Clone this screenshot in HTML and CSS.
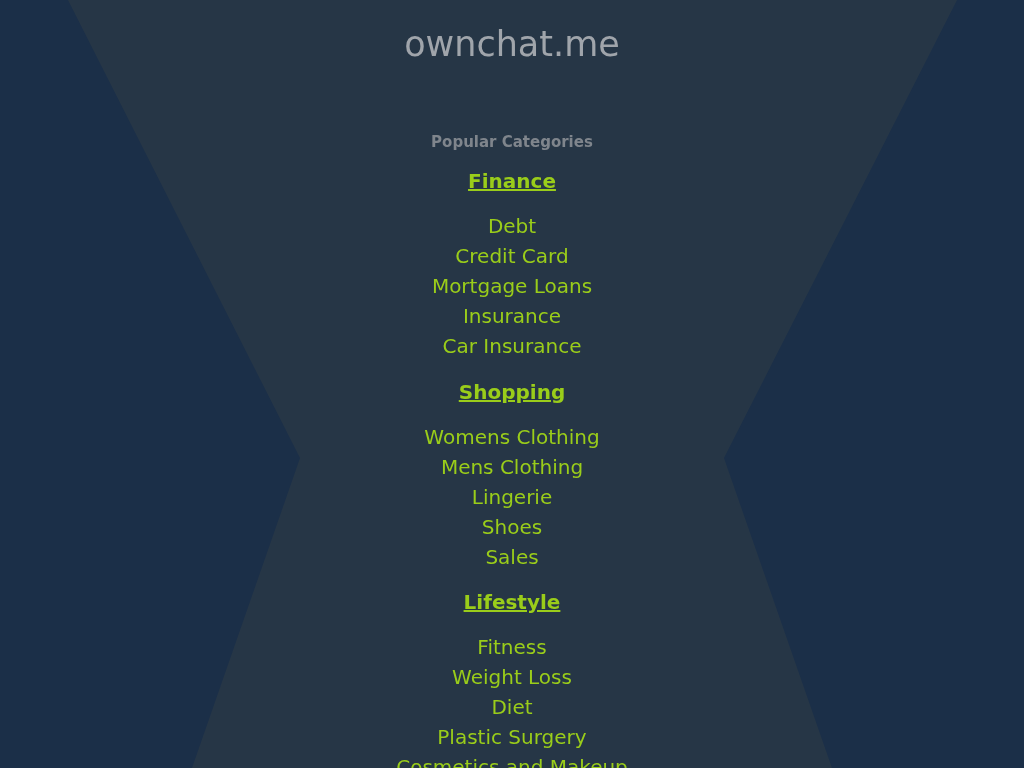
FILE: index.html
```html
<!DOCTYPE html>
<html lang="en">
<head>
<meta charset="utf-8">
<title>ownchat.me</title>
<link rel="stylesheet" href="styles.css">
</head>
<body>
<div class="page">
  <h1 class="site-title">ownchat.me</h1>
  <div class="popular">Popular Categories</div>
  <div class="category">
    <a class="cat-head" href="#">Finance</a>
    <ul class="links">
      <li><a href="#">Debt</a></li>
      <li><a href="#">Credit Card</a></li>
      <li><a href="#">Mortgage Loans</a></li>
      <li><a href="#">Insurance</a></li>
      <li><a href="#">Car Insurance</a></li>
    </ul>
  </div>
  <div class="category">
    <a class="cat-head" href="#">Shopping</a>
    <ul class="links">
      <li><a href="#">Womens Clothing</a></li>
      <li><a href="#">Mens Clothing</a></li>
      <li><a href="#">Lingerie</a></li>
      <li><a href="#">Shoes</a></li>
      <li><a href="#">Sales</a></li>
    </ul>
  </div>
  <div class="category">
    <a class="cat-head" href="#">Lifestyle</a>
    <ul class="links">
      <li><a href="#">Fitness</a></li>
      <li><a href="#">Weight Loss</a></li>
      <li><a href="#">Diet</a></li>
      <li><a href="#">Plastic Surgery</a></li>
      <li><a href="#">Cosmetics and Makeup</a></li>
    </ul>
  </div>
</div>
</body>
</html>
```
FILE: styles.css
```css
html, body {
  margin: 0;
  padding: 0;
}
body {
  background: #1b2f48;
  font-family: "DejaVu Sans", sans-serif;
  min-height: 100vh;
}
body::before {
  content: "";
  position: fixed;
  left: 0;
  top: 0;
  width: 100vw;
  height: 100vh;
  background: #263646;
  clip-path: polygon(6.64% 0, 93.46% 0, 70.7% 59.64%, 81.25% 100%, 18.75% 100%, 29.3% 59.64%);
  z-index: 0;
}
.page {
  position: relative;
  z-index: 1;
  display: flex;
  flex-direction: column;
  align-items: center;
  text-align: center;
}
.site-title {
  margin: 24px 0 0;
  font-size: 35px;
  line-height: 40px;
  font-weight: normal;
  color: #a0a5ab;
}
.popular {
  margin-top: 68px;
  font-size: 15px;
  line-height: 20px;
  font-weight: bold;
  color: #7f858c;
}
.category {
  display: flex;
  flex-direction: column;
  align-items: center;
  margin-top: 14px;
}
.category + .category {
  margin-top: 15.25px;
}
.cat-head {
  font-size: 20px;
  line-height: 30px;
  font-weight: bold;
  color: #9acd1a;
  text-decoration: underline;
}
.links {
  list-style: none;
  margin: 15.25px 0 0;
  padding: 0;
}
.links li {
  font-size: 20px;
  line-height: 30px;
}
.links a {
  color: #9acd1a;
  text-decoration: none;
}
```
